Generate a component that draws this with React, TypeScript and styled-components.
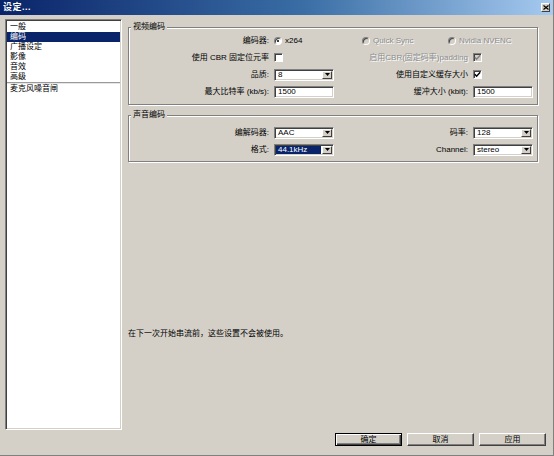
import React from "react";
import styled, { createGlobalStyle } from "styled-components";

const Global = createGlobalStyle`
  html, body { margin: 0; padding: 0; background: #d4d0c8; }
  body {
    font-family: "Liberation Sans", "Noto Sans CJK SC", sans-serif;
    font-size: 8px;
    color: #000;
  }
  * { box-sizing: border-box; }
`;

const Window = styled.div`
  width: 554px;
  height: 456px;
  display: flex;
  flex-direction: column;
  background: #d4d0c8;
  border-right: 1px solid #808080;
  border-bottom: 1px solid #808080;
  overflow: hidden;
`;

const TitleBar = styled.div`
  height: 15px;
  flex: none;
  display: flex;
  align-items: center;
  justify-content: space-between;
  padding: 0 3px 0 3px;
  background: linear-gradient(to right, #0a246a 0%, #3a6ea5 55%, #a6caf0 100%);
`;

const TitleText = styled.span`
  color: #fff;
  font-weight: bold;
  font-size: 9px;
  line-height: 15px;
  letter-spacing: 0.5px;
`;

const CloseButton = styled.div`
  width: 9px;
  height: 9px;
  background: #d4d0c8;
  border-top: 1px solid #fff;
  border-left: 1px solid #fff;
  border-right: 1px solid #404040;
  border-bottom: 1px solid #404040;
  display: flex;
  align-items: center;
  justify-content: center;
`;

const Body = styled.div`
  display: flex;
  gap: 6px;
  padding: 4px 0 0 5px;
`;

const Sidebar = styled.div`
  width: 117px;
  height: 411px;
  flex: none;
  background: #fff;
  border-top: 1px solid #808080;
  border-left: 1px solid #808080;
  border-right: 1px solid #fff;
  border-bottom: 1px solid #fff;
  box-shadow: inset 1px 1px 0 #404040, inset -1px -1px 0 #d4d0c8;
  padding: 2px 1px 1px 1px;
  display: flex;
  flex-direction: column;
`;

const ListItem = styled.div<{ $selected?: boolean }>`
  height: 10px;
  line-height: 10px;
  padding-left: 3px;
  white-space: nowrap;
  background: ${(p) => (p.$selected ? "#0a246a" : "transparent")};
  color: ${(p) => (p.$selected ? "#fff" : "#000")};
`;

const ListDivider = styled.div`
  height: 2px;
  border-top: 1px solid #9a9a9a;
  border-bottom: 1px solid #e6e6e6;
`;

const Main = styled.div`
  width: 411px;
  display: flex;
  flex-direction: column;
  padding-top: 3px;
`;

const GroupBox = styled.fieldset<{ $padTop: number; $padBottom: number; $gapTop?: number }>`
  margin: ${(p) => p.$gapTop ?? 0}px 0 0 0;
  width: 410px;
  min-width: 0;
  padding: ${(p) => p.$padTop}px 4px ${(p) => p.$padBottom}px 1px;
  border: 1px solid #808080;
  box-shadow: inset 1px 1px 0 #fff, 1px 1px 0 #fff;
`;

const Legend = styled.legend`
  margin-left: 1px;
  padding: 0 2px;
  line-height: 10px;
  height: 10px;
  background: #d4d0c8;
`;

const FormGrid = styled.div`
  display: grid;
  grid-template-columns: 139px 60px 129px 60px;
  column-gap: 5px;
  grid-auto-rows: 17px;
  align-items: center;
`;

const Label = styled.span<{ $disabled?: boolean }>`
  justify-self: end;
  white-space: nowrap;
  line-height: 10px;
  color: ${(p) => (p.$disabled ? "#8c8c8c" : "#000")};
  text-shadow: ${(p) => (p.$disabled ? "1px 1px 0 #fff" : "none")};
`;

const Cell = styled.div<{ $span?: number; $padLeft?: number }>`
  grid-column: ${(p) => (p.$span ? `span ${p.$span}` : "auto")};
  display: flex;
  align-items: center;
  padding-left: ${(p) => p.$padLeft ?? 0}px;
  white-space: nowrap;
`;

const RadioOption = styled.span<{ $width?: number; $disabled?: boolean }>`
  display: inline-flex;
  align-items: center;
  gap: 3px;
  width: ${(p) => (p.$width ? `${p.$width}px` : "auto")};
  line-height: 10px;
  color: ${(p) => (p.$disabled ? "#8c8c8c" : "#000")};
  text-shadow: ${(p) => (p.$disabled ? "1px 1px 0 #fff" : "none")};
`;

const RadioCircle = styled.span<{ $checked?: boolean; $disabled?: boolean }>`
  position: relative;
  width: 8px;
  height: 8px;
  flex: none;
  border-radius: 50%;
  background: ${(p) => (p.$disabled ? "#d4d0c8" : "#fff")};
  border: 1px solid;
  border-color: #808080 #fff #fff #808080;
  box-shadow: inset 1px 1px 0 #404040;
  &::after {
    content: "";
    display: ${(p) => (p.$checked ? "block" : "none")};
    position: absolute;
    left: 2px;
    top: 2px;
    width: 2px;
    height: 2px;
    border-radius: 50%;
    background: #000;
  }
`;

const CheckBox = styled.span<{ $disabled?: boolean }>`
  width: 9px;
  height: 9px;
  flex: none;
  display: inline-flex;
  align-items: center;
  justify-content: center;
  background: ${(p) => (p.$disabled ? "#d4d0c8" : "#fff")};
  border: 1px solid;
  border-color: #808080 #fff #fff #808080;
  box-shadow: inset 1px 1px 0 #404040;
`;

const SelectBox = styled.div`
  width: 60px;
  height: 12px;
  display: flex;
  background: #fff;
  border: 1px solid;
  border-color: #808080 #fff #fff #808080;
  box-shadow: inset 1px 1px 0 #404040, inset -1px -1px 0 #d4d0c8;
  padding: 1px;
`;

const SelectValue = styled.span<{ $focused?: boolean }>`
  flex: 1;
  line-height: 8px;
  padding-left: 2px;
  margin-right: 1px;
  overflow: hidden;
  white-space: nowrap;
  background: ${(p) => (p.$focused ? "#0a246a" : "transparent")};
  color: ${(p) => (p.$focused ? "#fff" : "#000")};
`;

const SelectButton = styled.span`
  width: 10px;
  flex: none;
  display: flex;
  align-items: center;
  justify-content: center;
  background: #d4d0c8;
  border-top: 1px solid #fff;
  border-left: 1px solid #fff;
  border-right: 1px solid #404040;
  border-bottom: 1px solid #404040;
`;

const TextInput = styled.div`
  width: 60px;
  height: 12px;
  background: #fff;
  border: 1px solid;
  border-color: #808080 #fff #fff #808080;
  box-shadow: inset 1px 1px 0 #404040, inset -1px -1px 0 #d4d0c8;
  padding-left: 3px;
  line-height: 10px;
`;

const Note = styled.div`
  margin-top: 167px;
  line-height: 10px;
`;

const Footer = styled.div`
  display: flex;
  justify-content: flex-end;
  gap: 5px;
  margin-top: 3px;
  padding-right: 7px;
`;

const Button = styled.div<{ $default?: boolean }>`
  width: 67px;
  height: 13px;
  display: flex;
  align-items: center;
  justify-content: center;
  line-height: 10px;
  background: #d4d0c8;
  border: 1px solid ${(p) => (p.$default ? "#000" : "#fff")};
  ${(p) =>
    p.$default
      ? `box-shadow: inset 1px 1px 0 #fff, inset -1px -1px 0 #404040, inset -2px -2px 0 #808080;`
      : `border-color: #fff #404040 #404040 #fff; box-shadow: inset -1px -1px 0 #808080;`}
`;

const Check = ({ color = "#000" }: { color?: string }) => (
  <svg width="7" height="7" viewBox="0 0 7 7">
    <polyline points="0.8,3.2 2.6,5.2 6.2,1.2" fill="none" stroke={color} strokeWidth="1.4" />
  </svg>
);

const Arrow = () => (
  <svg width="5" height="3" viewBox="0 0 5 3">
    <polygon points="0,0 5,0 2.5,3" fill="#000" />
  </svg>
);

const Select = ({ value, focused }: { value: string; focused?: boolean }) => (
  <SelectBox>
    <SelectValue $focused={focused}>{value}</SelectValue>
    <SelectButton>
      <Arrow />
    </SelectButton>
  </SelectBox>
);

const navItems = ["一般", "编码", "广播设定", "影像", "音效", "高级"];

export default function App() {
  return (
    <>
      <Global />
      <Window>
        <TitleBar>
          <TitleText>设定...</TitleText>
          <CloseButton>
            <svg width="6" height="5" viewBox="0 0 6 5">
              <path d="M0.5 0.5 L5.5 4.5 M5.5 0.5 L0.5 4.5" stroke="#000" strokeWidth="1.2" />
            </svg>
          </CloseButton>
        </TitleBar>
        <Body>
          <Sidebar>
            {navItems.map((n) => (
              <ListItem key={n} $selected={n === "编码"}>
                {n}
              </ListItem>
            ))}
            <ListDivider />
            <ListItem>麦克风噪音闸</ListItem>
          </Sidebar>
          <Main>
            <GroupBox $padTop={0} $padBottom={4}>
              <Legend>视频编码</Legend>
              <FormGrid>
                <Label>编码器:</Label>
                <Cell>
                  <RadioOption>
                    <RadioCircle $checked />
                    x264
                  </RadioOption>
                </Cell>
                <Cell $span={2} $padLeft={23}>
                  <RadioOption $width={86} $disabled>
                    <RadioCircle $disabled />
                    Quick Sync
                  </RadioOption>
                  <RadioOption $disabled>
                    <RadioCircle $disabled />
                    Nvidia NVENC
                  </RadioOption>
                </Cell>

                <Label>使用 CBR 固定位元率</Label>
                <Cell>
                  <CheckBox />
                </Cell>
                <Label $disabled>启用CBR(固定码率)padding</Label>
                <Cell>
                  <CheckBox $disabled>
                    <Check color="#808080" />
                  </CheckBox>
                </Cell>

                <Label>品质:</Label>
                <Cell>
                  <Select value="8" />
                </Cell>
                <Label>使用自定义缓存大小</Label>
                <Cell>
                  <CheckBox>
                    <Check />
                  </CheckBox>
                </Cell>

                <Label>最大比特率 (kb/s):</Label>
                <Cell>
                  <TextInput>1500</TextInput>
                </Cell>
                <Label>缓冲大小 (kbit):</Label>
                <Cell>
                  <TextInput>1500</TextInput>
                </Cell>
              </FormGrid>
            </GroupBox>

            <GroupBox $padTop={4} $padBottom={3} $gapTop={5}>
              <Legend>声音编码</Legend>
              <FormGrid>
                <Label>编解码器:</Label>
                <Cell>
                  <Select value="AAC" />
                </Cell>
                <Label>码率:</Label>
                <Cell>
                  <Select value="128" />
                </Cell>

                <Label>格式:</Label>
                <Cell>
                  <Select value="44.1kHz" focused />
                </Cell>
                <Label>Channel:</Label>
                <Cell>
                  <Select value="stereo" />
                </Cell>
              </FormGrid>
            </GroupBox>

            <Note>在下一次开始串流前，这些设置不会被使用。</Note>
          </Main>
        </Body>
        <Footer>
          <Button $default>确定</Button>
          <Button>取消</Button>
          <Button>应用</Button>
        </Footer>
      </Window>
    </>
  );
}
